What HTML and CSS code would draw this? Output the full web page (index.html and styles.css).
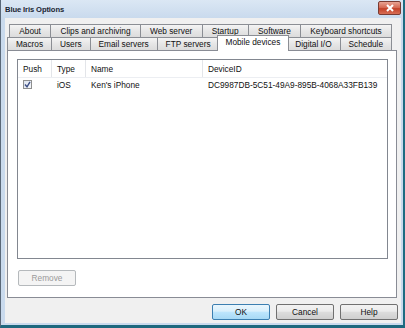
FILE: index.html
```html
<!DOCTYPE html>
<html>
<head>
<meta charset="utf-8">
<link rel="stylesheet" href="styles.css">
</head>
<body>
<div class="window">
  <div class="titlebar">
    <span class="title">Blue Iris Options</span>
    <span class="close"><svg width="10" height="8" viewBox="0 0 10 8"><path d="M2 1 L8 7 M8 1 L2 7" stroke="#fff" stroke-width="2" fill="none"/></svg></span>
  </div>
  <div class="client">
    <div class="tabrow row1">
      <div class="tab">About</div>
      <div class="tab">Clips and archiving</div>
      <div class="tab">Web server</div>
      <div class="tab">Startup</div>
      <div class="tab">Software</div>
      <div class="tab">Keyboard shortcuts</div>
    </div>
    <div class="tabrow row2">
      <div class="tab">Macros</div>
      <div class="tab">Users</div>
      <div class="tab">Email servers</div>
      <div class="tab">FTP servers</div>
      <div class="tab selected">Mobile devices</div>
      <div class="tab">Digital I/O</div>
      <div class="tab">Schedule</div>
    </div>
    <div class="panel">
      <div class="listview">
        <div class="lv-header">
          <div class="col c-push">Push</div>
          <div class="col c-type">Type</div>
          <div class="col c-name">Name</div>
          <div class="col c-id">DeviceID</div>
        </div>
        <div class="lv-row">
          <div class="col c-push"><span class="checkbox"><svg width="7" height="7" viewBox="0 0 7 7"><path d="M1 3.5 L3 5.8 L6 0.8" stroke="#3d4f86" stroke-width="1.4" fill="none"/></svg></span></div>
          <div class="col c-type">iOS</div>
          <div class="col c-name">Ken's iPhone</div>
          <div class="col c-id">DC9987DB-5C51-49A9-895B-4068A33FB139</div>
        </div>
      </div>
      <button class="btn disabled">Remove</button>
    </div>
    <div class="buttons">
      <button class="btn default">OK</button>
      <button class="btn">Cancel</button>
      <button class="btn">Help</button>
    </div>
  </div>
</div>
</body>
</html>
```
FILE: styles.css
```css
html, body {
  margin: 0;
  padding: 0;
  background: #ffffff;
}
.window {
  width: 405px;
  height: 328px;
  box-sizing: border-box;
  display: flex;
  flex-direction: column;
  background: #c9daed;
  border-left: 1px solid #5a6878;
  border-right: 2px solid #1f6c82;
  border-bottom: 3px solid #1d687e;
  padding: 0 2px 2px 4px;
  font-family: "Liberation Sans", Arial, sans-serif;
  font-size: 8.3px;
  color: #111;
}
.titlebar {
  height: 18px;
  flex: none;
  display: flex;
  align-items: center;
  justify-content: space-between;
  background: linear-gradient(#dbe7f4, #c9daed);
  margin: 0 -2px 0 -4px;
  padding: 0 2px 0 4px;
}
.title {
  font-size: 7.6px;
  font-weight: bold;
  color: #1b2633;
  letter-spacing: -0.1px;
  padding-top: 1px;
}
.close {
  width: 21px;
  height: 12px;
  margin-bottom: 2px;
  border: 1px solid #7a3b32;
  border-radius: 2px;
  background: linear-gradient(#e8a493, #d3654e 50%, #c34128 55%, #d86e55);
  display: flex;
  align-items: center;
  justify-content: center;
}
.close svg { display: block; }
.client {
  flex: 1;
  background: #f0f0f0;
  display: flex;
  flex-direction: column;
  padding: 6px 4px 3px 2px;
}
.tabrow {
  display: flex;
  height: 13px;
  flex: none;
}
.row1 { margin: 0 5px 0 2px; }
.row2 { margin: 0 5px 0 0; position: relative; z-index: 1; }
.tab {
  flex: 1 1 auto;
  box-sizing: border-box;
  border: 1px solid #8b8e94;
  border-bottom: none;
  margin-left: -1px;
  padding: 0 6px;
  background: linear-gradient(#f4f4f4, #e6e6e6 50%, #dcdcdc);
  display: flex;
  align-items: center;
  justify-content: center;
  white-space: nowrap;
  line-height: 1;
}
.tab:first-child { margin-left: 0; }
.row2 .tab { height: 13px; }
.tab.selected {
  background: #ffffff;
  height: 16px;
  margin: -2px -2px 0 -3px;
  padding-bottom: 3px;
  position: relative;
  z-index: 2;
}
.tab.selected + .tab { margin-left: -1px; }
.panel {
  flex: none;
  height: 248px;
  box-sizing: border-box;
  border: 1px solid #898c95;
  background: #ffffff;
  display: flex;
  flex-direction: column;
  align-items: flex-start;
  padding: 8px 8px 0 9px;
}
.listview {
  align-self: stretch;
  height: 200px;
  box-sizing: border-box;
  border: 1px solid #828790;
  background: #fff;
}
.lv-header {
  display: flex;
  height: 17px;
  align-items: center;
  border-bottom: 1px solid #eceef2;
}
.lv-header .col {
  border-right: 1px solid #e3e5e9;
  height: 100%;
  display: flex;
  align-items: center;
}
.lv-row {
  display: flex;
  height: 13px;
  align-items: center;
}
.col {
  box-sizing: border-box;
  padding-left: 5px;
  white-space: nowrap;
}
.c-push { width: 34px; }
.c-type { width: 34px; }
.c-name { width: 117px; }
.c-id { flex: 1; }
.lv-header .c-id { border-right: none; }
.checkbox {
  display: flex;
  align-items: center;
  justify-content: center;
  width: 9px;
  height: 9px;
  box-sizing: border-box;
  border: 1px solid #8e8f8f;
  background: linear-gradient(135deg, #dde4ef, #f5f7fa);
}
.checkbox svg { display: block; }
.btn {
  font-family: "Liberation Sans", Arial, sans-serif;
  font-size: 8.3px;
  color: #111;
  width: 58px;
  height: 16px;
  box-sizing: border-box;
  border: 1px solid #707070;
  border-radius: 2px;
  background: linear-gradient(#f2f2f2, #ebebeb 45%, #dddddd 50%, #cfcfcf);
  padding: 0;
  margin: 0;
  line-height: 1;
}
.btn.disabled {
  margin-top: 11px;
  margin-left: 1px;
  color: #9a9a9a;
  border-color: #b5b9bc;
  background: #f4f4f4;
}
.btn.default {
  border-color: #3c7fb1;
  background: linear-gradient(#eaf6fd, #d9f0fc 45%, #bee6fd 50%, #a7d9f5);
}
.buttons {
  display: flex;
  justify-content: flex-end;
  gap: 6px;
  margin-top: 6px;
  margin-right: -1px;
}
```
